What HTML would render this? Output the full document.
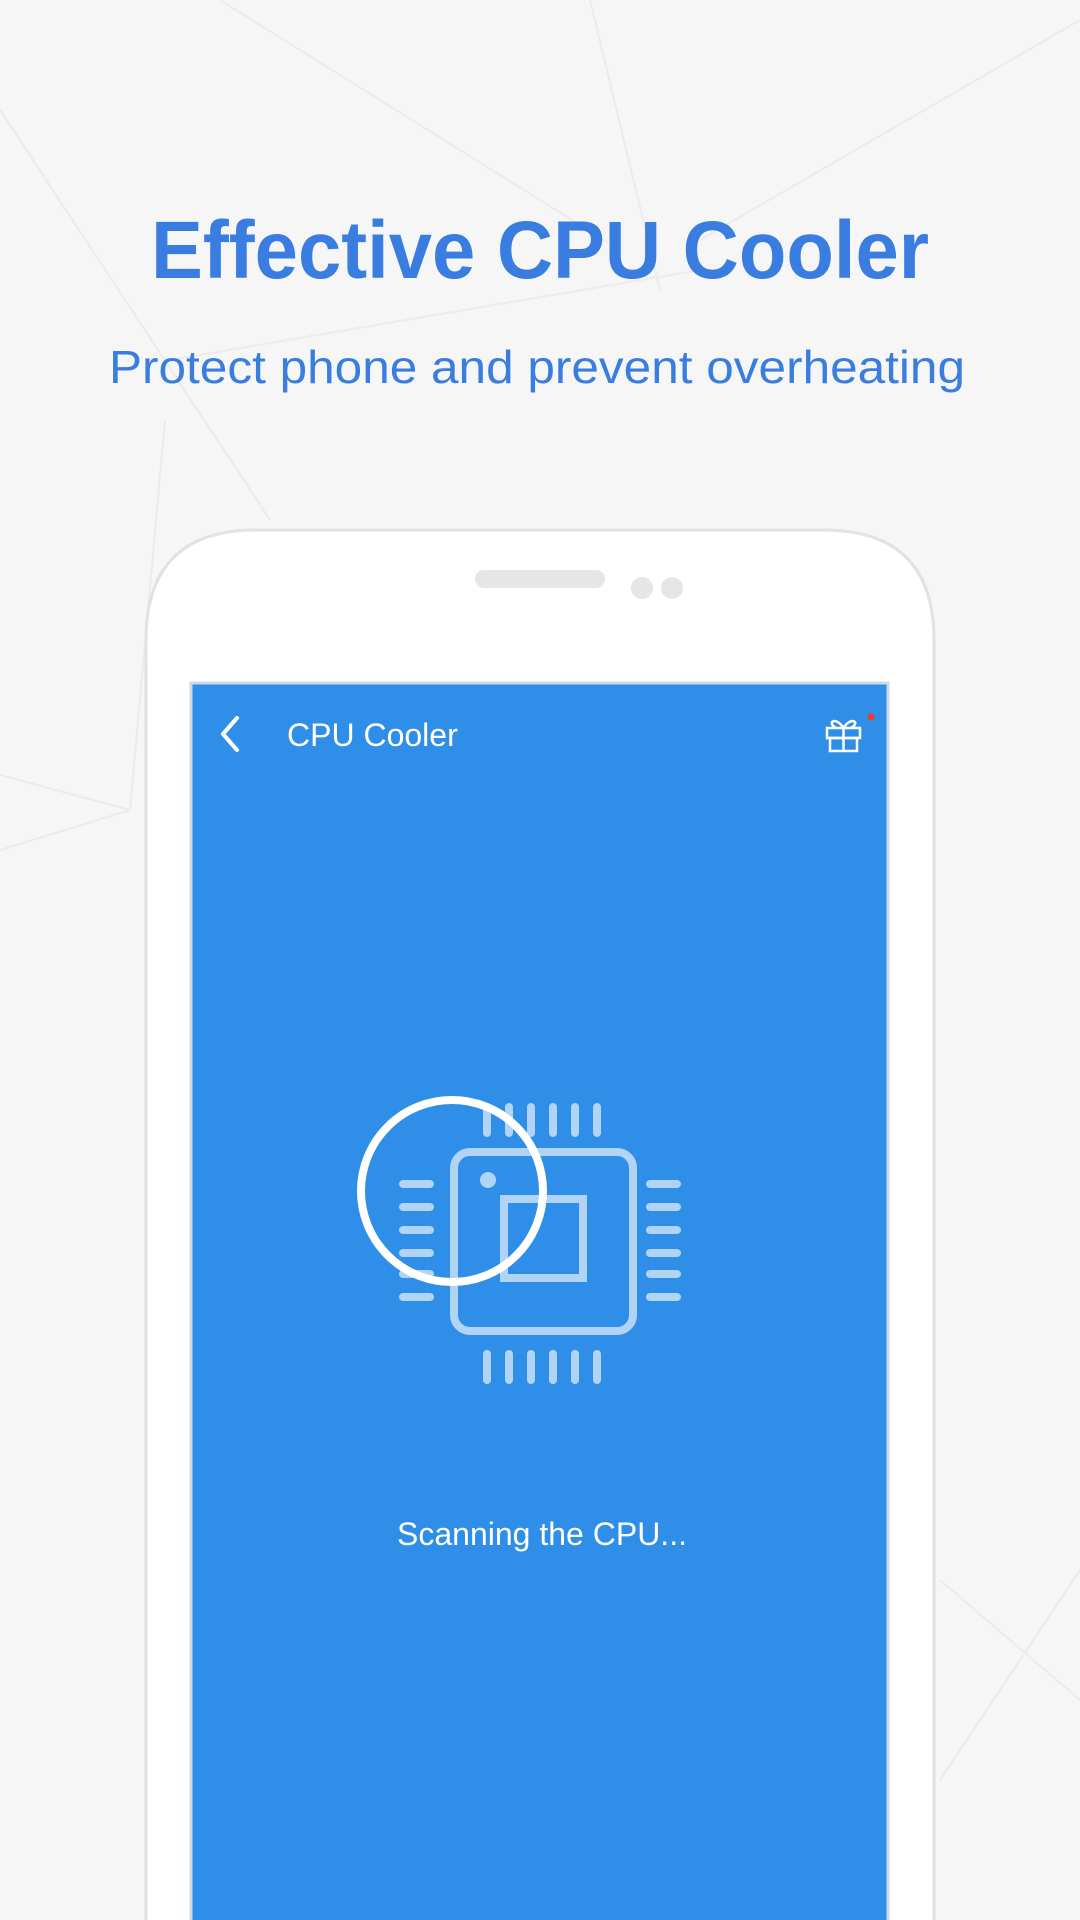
<!DOCTYPE html>
<html><head><meta charset="utf-8"><style>
html,body{margin:0;padding:0;width:1080px;height:1920px;overflow:hidden;background:#f6f6f6;font-family:"Liberation Sans",sans-serif}
svg{position:absolute;left:0;top:0}
</style></head><body>
<svg width="1080" height="1920" viewBox="0 0 1080 1920">
  <g stroke="#ebebeb" stroke-width="2" fill="none">
    <line x1="220" y1="0" x2="620" y2="250"/>
    <line x1="590" y1="0" x2="660" y2="290"/>
    <line x1="0" y1="110" x2="270" y2="520"/>
    <line x1="1080" y1="20" x2="700" y2="240"/>
    <line x1="170" y1="360" x2="700" y2="270"/>
    <line x1="165" y1="420" x2="130" y2="810"/>
    <line x1="0" y1="775" x2="130" y2="810"/>
    <line x1="0" y1="850" x2="130" y2="810"/>
    <line x1="940" y1="1580" x2="1080" y2="1700"/>
    <line x1="940" y1="1780" x2="1080" y2="1570"/>
  </g>
  <text x="540" y="278" text-anchor="middle" font-family="Liberation Sans" font-weight="bold" font-size="82" fill="#3a7de0" textLength="778" lengthAdjust="spacingAndGlyphs">Effective CPU Cooler</text>
  <text x="537" y="383" text-anchor="middle" font-family="Liberation Sans" font-size="46" fill="#3a7de0" textLength="856" lengthAdjust="spacingAndGlyphs">Protect phone and prevent overheating</text>

  <!-- phone -->
  <path d="M146 1930 V640 Q146 530 256 530 H824 Q934 530 934 640 V1930 Z" fill="#fff" stroke="#e2e2e6" stroke-width="3"/>
  <rect x="475" y="570" width="130" height="18" rx="9" fill="#e6e6e6"/>
  <circle cx="642" cy="588" r="11" fill="#e6e6e6"/>
  <circle cx="672" cy="588" r="11" fill="#e6e6e6"/>
  <rect x="191" y="683" width="697" height="1250" fill="#2f8ee8" stroke="#d0d8e4" stroke-width="3"/>

  <!-- toolbar -->
  <path d="M237 718 L223 734 L237 750" stroke="#fff" stroke-width="4" fill="none" stroke-linecap="round" stroke-linejoin="round"/>
  <text x="287" y="746" font-family="Liberation Sans" font-size="32" fill="#fff">CPU Cooler</text>
  <g stroke="#fff" stroke-width="2.5" fill="none">
    <rect x="827" y="728" width="33" height="10"/>
    <rect x="830" y="738" width="27" height="13"/>
    <line x1="843.5" y1="728" x2="843.5" y2="751"/>
    <path d="M843.5 728 C836 716 826 722 836 728 M843.5 728 C851 716 861 722 851 728"/>
  </g>
  <circle cx="871" cy="717" r="3.5" fill="#ee3b30"/>

  <!-- chip -->
  <g stroke="#b0d3f6" stroke-width="8" fill="none" stroke-linecap="round">
    <rect x="454" y="1152" width="179" height="179" rx="16"/>
    <rect x="504" y="1199" width="79" height="79" stroke-linecap="butt"/>
    <path d="M487 1107V1133M509 1107V1133M531 1107V1133M553 1107V1133M575 1107V1133M597 1107V1133"/>
    <path d="M487 1354V1380M509 1354V1380M531 1354V1380M553 1354V1380M575 1354V1380M597 1354V1380"/>
    <path d="M403 1184H430M403 1207H430M403 1230H430M403 1253H430M403 1274H430M403 1297H430"/>
    <path d="M650 1184H677M650 1207H677M650 1230H677M650 1253H677M650 1274H677M650 1297H677"/>
  </g>
  <circle cx="488" cy="1180" r="8" fill="#b0d3f6"/>
  <circle cx="452" cy="1191" r="91" fill="none" stroke="#fff" stroke-width="8"/>

  <text x="542" y="1545" text-anchor="middle" font-family="Liberation Sans" font-size="32" fill="#fff">Scanning the CPU...</text>
</svg>
</body></html>
